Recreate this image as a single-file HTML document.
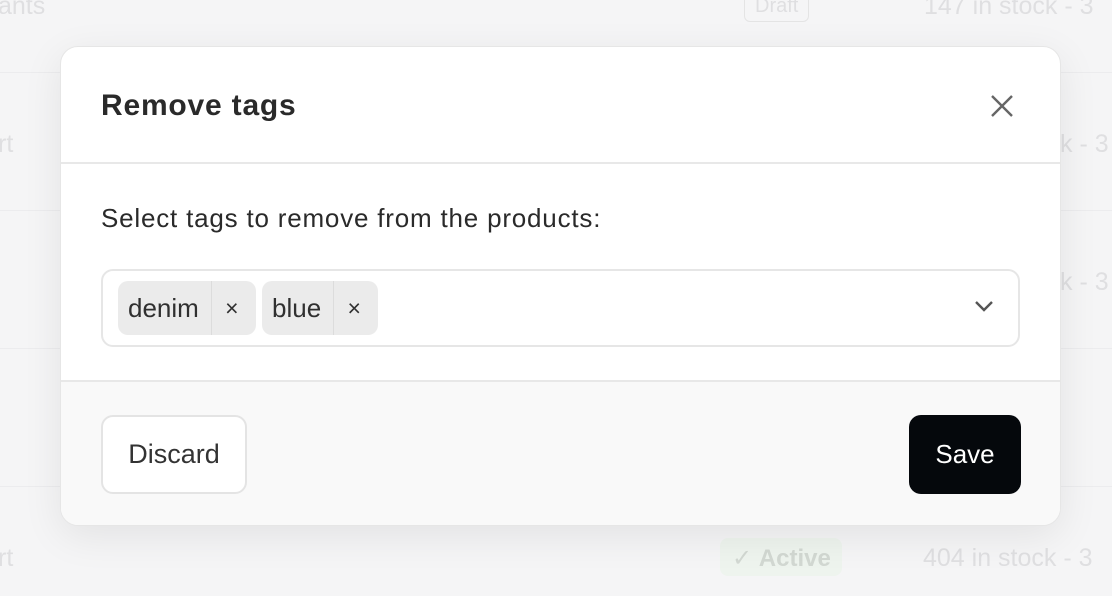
<!DOCTYPE html>
<html><head><style>
*{box-sizing:border-box;margin:0;padding:0}
body{width:1112px;height:596px;overflow:hidden;background:#f5f5f6;font-family:"Liberation Sans",sans-serif;position:relative}
.bg{position:absolute;color:#dfdfe1;font-size:25px}
.line{position:absolute;left:0;right:0;height:1px;background:#ececee}
.modal{position:absolute;left:60px;top:46px;width:1001px;height:480px;background:#fff;border:1px solid #e6e6e6;border-radius:18px;overflow:hidden;box-shadow:0 10px 40px rgba(0,0,0,.08)}
.hd{height:117px;border-bottom:2px solid #e8e8e8;position:relative}
.hd h1{position:absolute;left:40px;top:42px;font-size:30px;font-weight:bold;color:#2a2a2a;letter-spacing:0.8px}
.ft{position:absolute;left:0;right:0;top:333px;bottom:0;background:#f9f9f9;border-top:2px solid #e8e8e8}
.btn{position:absolute;top:33px;height:79px;border-radius:12px;font-size:26px;display:flex;align-items:center;justify-content:center}
.tag{position:absolute;top:10px;height:54px;background:#ebebeb;border-radius:10px;display:flex;align-items:center;font-size:26px;color:#303030}
.tag span{padding:0 12px 0 10px;height:100%;display:flex;align-items:center}
.tag b{font-weight:normal;border-left:1px solid #dcdcdc;height:100%;display:flex;align-items:center;justify-content:center;width:41px;font-size:23px}
</style></head><body>
<div class="bg" style="left:-2px;top:-8px">ants</div>
<div class="bg" style="left:744px;top:-6px;font-size:20px;border:1px solid #e4e4e4;border-radius:6px;padding:0 10px;height:28px">Draft</div>
<div class="bg" style="left:924px;top:-8px">147 in stock - 3</div>
<div class="line" style="top:72px"></div>
<div class="bg" style="left:-2px;top:130px">rt</div>
<div class="bg" style="left:1060px;top:130px">k - 3</div>
<div class="line" style="top:210px"></div>
<div class="bg" style="left:1060px;top:268px">k - 3</div>
<div class="line" style="top:348px"></div>
<div class="line" style="top:486px"></div>
<div class="bg" style="left:-2px;top:544px">rt</div>
<div class="bg" style="left:720px;top:538px;height:38px;width:122px;background:#eef4ee;border-radius:8px;color:#d2d8d2;padding:6px 0 0 12px;font-size:24px">✓ <span style="font-weight:bold">Active</span></div>
<div class="bg" style="left:923px;top:544px">404 in stock - 3</div>
<div class="modal">
 <div class="hd"><h1>Remove tags</h1>
  <svg style="position:absolute;left:929px;top:47px" width="24" height="24" viewBox="0 0 24 24"><path d="M2 2L22 22M22 2L2 22" stroke="#666" stroke-width="2.4" fill="none"/></svg>
 </div>
 <div style="position:absolute;left:40px;top:156px;font-size:26px;letter-spacing:0.8px;color:#2a2a2a">Select tags to remove from the products:</div>
 <div style="position:absolute;left:40px;top:222px;width:919px;height:78px;border:2px solid #e6e6e6;border-radius:12px">
  <div class="tag" style="left:15px;width:138px"><span>denim</span><b>×</b></div>
  <div class="tag" style="left:159px;width:116px"><span>blue</span><b>×</b></div>
  <svg style="position:absolute;left:871px;top:28px" width="20" height="14" viewBox="0 0 20 14"><path d="M2 3L10 11L18 3" stroke="#555" stroke-width="2.4" fill="none"/></svg>
 </div>
 <div class="ft">
  <div class="btn" style="left:40px;width:146px;background:#fff;border:2px solid #e4e4e4;color:#333;font-size:27px">Discard</div>
  <div class="btn" style="left:848px;width:112px;background:#05080c;color:#fff">Save</div>
 </div>
</div>
</body></html>
